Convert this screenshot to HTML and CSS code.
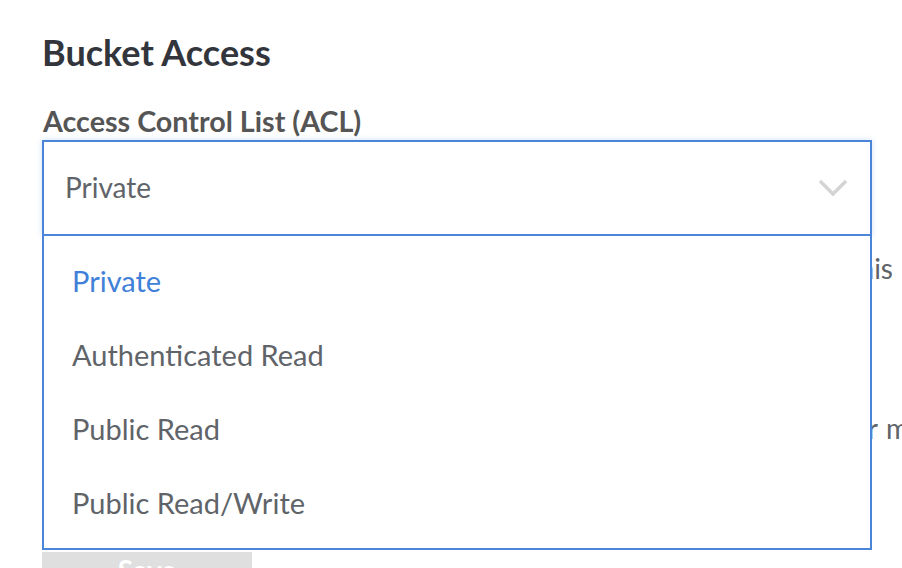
FILE: index.html
```html
<!DOCTYPE html>
<html lang="en">
<head>
<meta charset="utf-8">
<title>Bucket Access</title>
<link rel="stylesheet" href="styles.css">
</head>
<body>
<main class="page">
  <h2 class="title">Bucket Access</h2>
  <div class="field">
    <label class="label">Access Control List (ACL)</label>
    <div class="select-area">
      <div class="select">
        <span class="select-value">Private</span>
        <svg class="chevron" width="30" height="18" viewBox="0 0 30 18" aria-hidden="true">
          <path d="M2 2 L15 15 L28 2" fill="none" stroke="#d4d4d4" stroke-width="3.5"/>
        </svg>
      </div>
      <p class="help help-one"><span class="help-lead lead-one">Canned ACLs are predefined grants that control who may access this</span></p>
      <p class="help help-two"><span class="help-lead lead-two">Cross-Origin Resource Sharing (CORS) must be enabled for</span><span class="help-rest">more information.</span></p>
      <button class="save">Save</button>
      <ul class="menu">
        <li class="option selected">Private</li>
        <li class="option">Authenticated Read</li>
        <li class="option">Public Read</li>
        <li class="option">Public Read/Write</li>
      </ul>
    </div>
  </div>
</main>
</body>
</html>
```

FILE: styles.css
```css
html, body {
  margin: 0;
  padding: 0;
  background: #ffffff;
}

body {
  width: 902px;
  height: 568px;
  overflow: hidden;
}

.page {
  font-family: Lato, "Open Sans", sans-serif;
  padding: 29px 0 0 42px;
}

.title {
  margin: 0;
  font-size: 36px;
  font-weight: 700;
  color: #32363c;
  line-height: 46px;
}

.field {
  margin-top: 31px;
}

.label {
  display: block;
  font-size: 28.7px;
  font-weight: 700;
  color: #555555;
  line-height: 30px;
  margin: 0 0 4px 1px;
}

.select-area {
  position: relative;
}

.select {
  box-sizing: border-box;
  width: 830px;
  height: 96px;
  border: 2px solid #4a85d7;
  box-shadow: 0 0 6px rgba(74, 133, 215, 0.25);
  display: flex;
  align-items: center;
  justify-content: space-between;
  padding: 0 22px 3px 21px;
  background: #fff;
}

.select-value {
  font-size: 28px;
  color: #606469;
}

.chevron {
  display: block;
  margin-top: 3px;
}

.help {
  margin: 0;
  display: flex;
  font-size: 28px;
  color: #606469;
  white-space: nowrap;
  line-height: 34px;
}

.help-lead {
  flex: none;
  text-align: right;
}

.lead-one {
  width: 851px;
}

.lead-two {
  width: 836px;
}

.help-rest {
  flex: none;
  margin-left: 8px;
}

.help-one {
  margin-top: 15px;
}

.help-two {
  margin-top: 126px;
}

.save {
  display: block;
  margin-top: 107px;
  width: 210px;
  height: 36px;
  padding: 0;
  border: none;
  background: #dfdfdf;
  color: #ffffff;
  font-family: Lato, sans-serif;
  font-size: 28px;
  font-weight: 700;
  line-height: 36px;
}

.menu {
  position: absolute;
  top: 96px;
  left: 0;
  box-sizing: border-box;
  width: 830px;
  margin: 0;
  padding: 7px 0 9px;
  list-style: none;
  background: #ffffff;
  border: 2px solid #4a85d7;
  border-top: none;
}

.option {
  height: 74px;
  display: flex;
  align-items: center;
  padding-left: 28px;
  font-size: 29px;
  color: #606469;
}

.option.selected {
  color: #3f80d8;
}
```
